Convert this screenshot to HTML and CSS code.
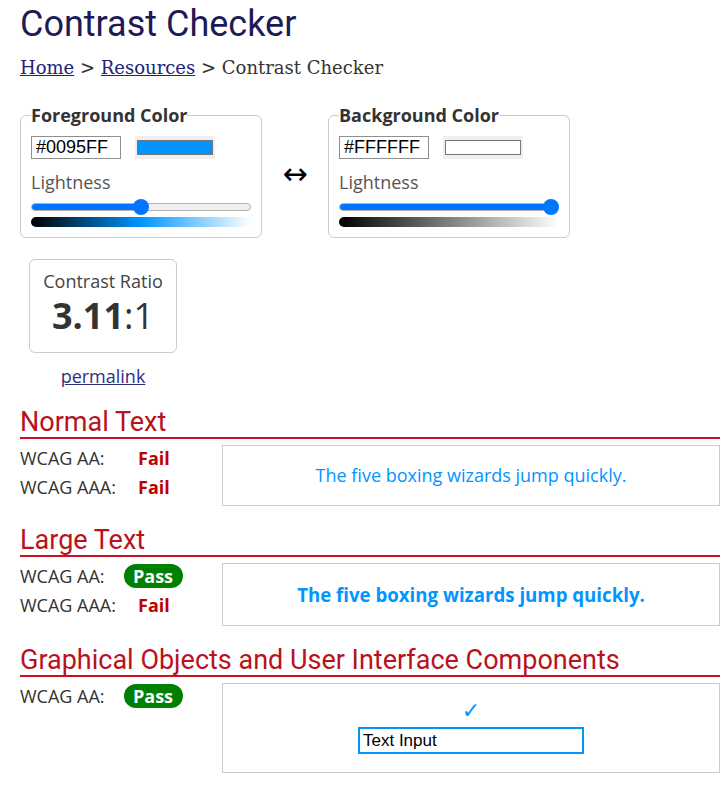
FILE: index.html
```html
<!DOCTYPE html>
<html lang="en">
<head>
<meta charset="utf-8">
<title>Contrast Checker</title>
<link rel="stylesheet" href="styles.css">
</head>
<body>
<main class="page">
  <h1 class="title">Contrast Checker</h1>
  <nav class="crumbs"><a href="#">Home</a> &gt; <a href="#">Resources</a> &gt; Contrast Checker</nav>

  <div class="pickers">
    <fieldset class="picker">
      <legend>Foreground Color</legend>
      <div class="color-row">
        <input class="hex" type="text" value="#0095FF">
        <div class="swatch"><span class="swatch-fill fg"></span></div>
      </div>
      <div class="light-label">Lightness</div>
      <div class="slider">
        <div class="track"><span class="fill" style="width:50%"></span></div>
        <span class="thumb" style="left:calc(50% - 8px)"></span>
      </div>
      <div class="grad grad-fg"></div>
    </fieldset>

    <div class="swap">&#8596;</div>

    <fieldset class="picker">
      <legend>Background Color</legend>
      <div class="color-row">
        <input class="hex" type="text" value="#FFFFFF">
        <div class="swatch"><span class="swatch-fill bg"></span></div>
      </div>
      <div class="light-label">Lightness</div>
      <div class="slider">
        <div class="track"><span class="fill" style="width:100%"></span></div>
        <span class="thumb" style="left:calc(100% - 16px)"></span>
      </div>
      <div class="grad grad-bg"></div>
    </fieldset>
  </div>

  <div class="ratio-wrap">
    <div class="ratio-box">
      <div class="ratio-label">Contrast Ratio</div>
      <div class="ratio-value"><b>3.11</b>:1</div>
    </div>
    <a class="permalink" href="#">permalink</a>
  </div>

  <section class="result">
    <h2>Normal Text</h2>
    <div class="result-row">
      <div class="levels">
        <div class="level"><span class="lvl-name">WCAG AA:</span><span class="fail">Fail</span></div>
        <div class="level"><span class="lvl-name">WCAG AAA:</span><span class="fail">Fail</span></div>
      </div>
      <div class="sample sample-normal">The five boxing wizards jump quickly.</div>
    </div>
  </section>

  <section class="result">
    <h2>Large Text</h2>
    <div class="result-row">
      <div class="levels">
        <div class="level"><span class="lvl-name">WCAG AA:</span><span class="pass">Pass</span></div>
        <div class="level"><span class="lvl-name">WCAG AAA:</span><span class="fail">Fail</span></div>
      </div>
      <div class="sample sample-large">The five boxing wizards jump quickly.</div>
    </div>
  </section>

  <section class="result">
    <h2>Graphical Objects and User Interface Components</h2>
    <div class="result-row">
      <div class="levels">
        <div class="level"><span class="lvl-name">WCAG AA:</span><span class="pass">Pass</span></div>
      </div>
      <div class="sample sample-ui">
        <div class="check">&#10003;</div>
        <div class="fake-input">Text Input</div>
      </div>
    </div>
  </section>
</main>
</body>
</html>
```

FILE: styles.css
```css
* { box-sizing: border-box; }
html, body { background: #fff; }
body {
  margin: 0 8px;
  font-family: "Open Sans", "Liberation Sans", sans-serif;
  font-size: 18px;
  color: #333;
}
.page { padding-left: 12px; }

.title {
  margin: 0;
  padding-top: 3px;
  font-family: Roboto, "Liberation Sans", sans-serif;
  font-weight: 400;
  font-size: 36px;
  line-height: 43px;
  color: #1d1b57;
}

.crumbs {
  margin-top: 11px;
  font-family: "DejaVu Serif", "Liberation Serif", serif;
  font-size: 18px;
  line-height: 22px;
  color: #333;
}
.crumbs a { color: #22227a; }

.pickers {
  display: flex;
  align-items: center;
  margin-top: 24px;
}
.picker {
  margin: 0;
  width: 242px;
  padding: 0 10px 10px;
  border: 1px solid #ccc;
  border-radius: 6px;
}
.picker legend {
  padding: 0;
  font-weight: 700;
  font-size: 18px;
  line-height: 24px;
  color: #333;
}
.color-row {
  display: flex;
  gap: 14px;
  margin-top: 9px;
}
.hex {
  width: 90px;
  height: 23px;
  margin: 0;
  padding: 0 4px;
  border: 1px solid #8f8f8f;
  font-family: "Liberation Sans", Arial, sans-serif;
  font-size: 18px;
  color: #000;
}
.swatch {
  width: 80px;
  height: 23px;
  background: #efefef;
  padding: 4px 2px;
  display: flex;
}
.swatch-fill { flex: 1; border: 1px solid #767676; }
.swatch-fill.fg { background: #0095ff; }
.swatch-fill.bg { background: #fff; }

.light-label {
  margin-top: 11px;
  font-size: 18px;
  line-height: 24px;
  color: #555;
}
.slider {
  position: relative;
  height: 16px;
  margin-top: 5px;
  display: flex;
  align-items: center;
}
.track {
  flex: 1;
  height: 8px;
  border: 1px solid #b2b2b2;
  border-radius: 4px;
  background: #efefef;
  overflow: hidden;
  display: flex;
}
.fill { background: #0075ff; }
.thumb {
  position: absolute;
  top: 0;
  width: 16px;
  height: 16px;
  border-radius: 50%;
  background: #0075ff;
}
.grad {
  height: 10px;
  margin-top: 2px;
  border-radius: 5px 0 0 5px;
}
.grad-fg { background: linear-gradient(to right, #000, #0095ff 50%, #fff); }
.grad-bg { background: linear-gradient(to right, #000, #fff); }

.swap {
  width: 66px;
  text-align: center;
  font-family: "DejaVu Sans", sans-serif;
  font-size: 30px;
  color: #000;
  padding-top: 6px;
}

.ratio-wrap {
  width: 148px;
  margin: 21px 0 0 9px;
  text-align: center;
}
.ratio-box {
  border: 1px solid #ccc;
  border-radius: 6px;
  padding: 9px 0 13px;
}
.ratio-label {
  font-size: 18px;
  line-height: 24px;
  color: #444;
}
.ratio-value {
  font-size: 36px;
  line-height: 46px;
  color: #333;
}
.ratio-value b { font-weight: 700; }
.permalink {
  display: inline-block;
  margin-top: 11px;
  font-size: 18px;
  line-height: 24px;
  color: #2e2e86;
}

.result { margin-top: 19px; }
.result h2 {
  margin: 0;
  font-family: Roboto, "Liberation Sans", sans-serif;
  font-weight: 400;
  font-size: 27px;
  line-height: 30px;
  color: #b8121b;
  border-bottom: 2px solid #cc0f1c;
}
.result-row {
  display: flex;
  margin-top: 6px;
}
.levels { width: 202px; flex: none; margin-top: -2px; }
.level {
  display: flex;
  align-items: center;
  height: 29px;
  font-size: 18px;
}
.lvl-name { width: 104px; flex: none; }
.fail {
  padding-left: 14px;
  font-weight: 700;
  color: #c00000;
}
.pass {
  display: inline-block;
  height: 24px;
  line-height: 24px;
  padding: 0 10px 0 9px;
  border-radius: 12px;
  background: #008000;
  color: #fff;
  font-weight: 700;
}
.sample {
  flex: 1;
  border: 1px solid #ccc;
  text-align: center;
  color: #0095ff;
}
.sample-normal {
  padding: 18px 0;
  font-size: 18px;
  line-height: 23px;
}
.sample-large {
  padding: 18px 0;
  font-size: 18.67px;
  font-weight: 700;
  line-height: 25px;
}
.sample-ui {
  padding: 14px 0 18px;
  display: flex;
  flex-direction: column;
  align-items: center;
}
.check {
  font-family: "DejaVu Sans", sans-serif;
  font-size: 22px;
  line-height: 26px;
  color: #0095ff;
}
.fake-input {
  margin-top: 3px;
  width: 226px;
  height: 27px;
  border: 2px solid #0095ff;
  padding: 0 3px;
  text-align: left;
  font-family: "Liberation Sans", Arial, sans-serif;
  font-size: 17px;
  line-height: 23px;
  color: #000;
}
```
